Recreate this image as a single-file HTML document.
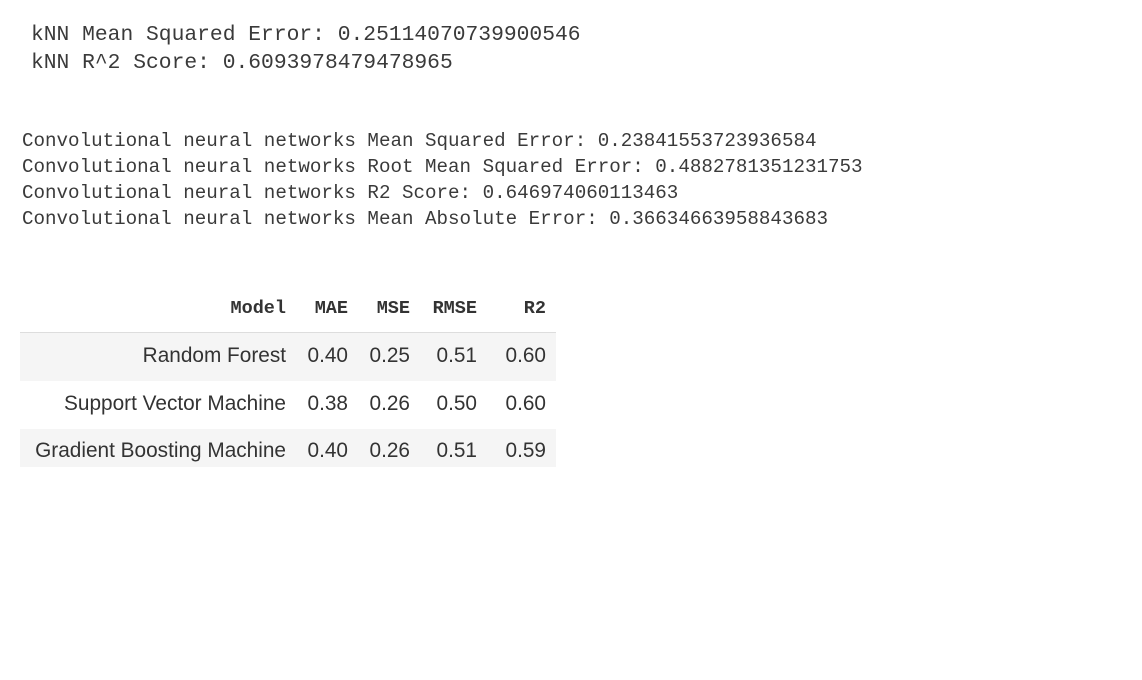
<!DOCTYPE html>
<html><head><meta charset="utf-8"><style>
body{margin:0;width:1142px;height:680px;background:#fff;position:relative;overflow:hidden;color:#333}
.m{position:absolute;font-family:"Liberation Mono",monospace;white-space:pre;color:#3a3a3a}
.k{font-size:21.3px;left:31px}
.c{font-size:19.2px;left:22px}
.row{position:absolute;left:20px;width:536px;height:48px}
.t{position:absolute;font-family:"Liberation Sans",sans-serif;font-size:20.8px;color:#333;white-space:nowrap;text-align:right}
.h{position:absolute;font-family:"Liberation Mono",monospace;font-weight:bold;font-size:18.5px;color:#333;white-space:nowrap;text-align:right}
</style></head><body>
<div class="m k" style="top:23px">kNN Mean Squared Error: 0.25114070739900546</div>
<div class="m k" style="top:51px">kNN R^2 Score: 0.6093978479478965</div>
<div class="m c" style="top:130px">Convolutional neural networks Mean Squared Error: 0.23841553723936584</div>
<div class="m c" style="top:156px">Convolutional neural networks Root Mean Squared Error: 0.4882781351231753</div>
<div class="m c" style="top:182px">Convolutional neural networks R2 Score: 0.646974060113463</div>
<div class="m c" style="top:208px">Convolutional neural networks Mean Absolute Error: 0.36634663958843683</div>

<div class="h" style="top:298px;right:856px">Model</div>
<div class="h" style="top:298px;right:794px">MAE</div>
<div class="h" style="top:298px;right:732px">MSE</div>
<div class="h" style="top:298px;right:665px">RMSE</div>
<div class="h" style="top:298px;right:596px">R2</div>
<div style="position:absolute;left:20px;top:332px;width:536px;height:1px;background:#ddd"></div>

<div class="row" style="top:333px;background:#f5f5f5"></div>
<div class="row" style="top:429px;height:38px;background:#f5f5f5"></div>

<div class="t" style="top:344px;right:856px">Random Forest</div>
<div class="t" style="top:344px;right:794px">0.40</div>
<div class="t" style="top:344px;right:732px">0.25</div>
<div class="t" style="top:344px;right:665px">0.51</div>
<div class="t" style="top:344px;right:596px">0.60</div>

<div class="t" style="top:392px;right:856px">Support Vector Machine</div>
<div class="t" style="top:392px;right:794px">0.38</div>
<div class="t" style="top:392px;right:732px">0.26</div>
<div class="t" style="top:392px;right:665px">0.50</div>
<div class="t" style="top:392px;right:596px">0.60</div>

<div class="t" style="top:439px;right:856px">Gradient Boosting Machine</div>
<div class="t" style="top:439px;right:794px">0.40</div>
<div class="t" style="top:439px;right:732px">0.26</div>
<div class="t" style="top:439px;right:665px">0.51</div>
<div class="t" style="top:439px;right:596px">0.59</div>
</body></html>
